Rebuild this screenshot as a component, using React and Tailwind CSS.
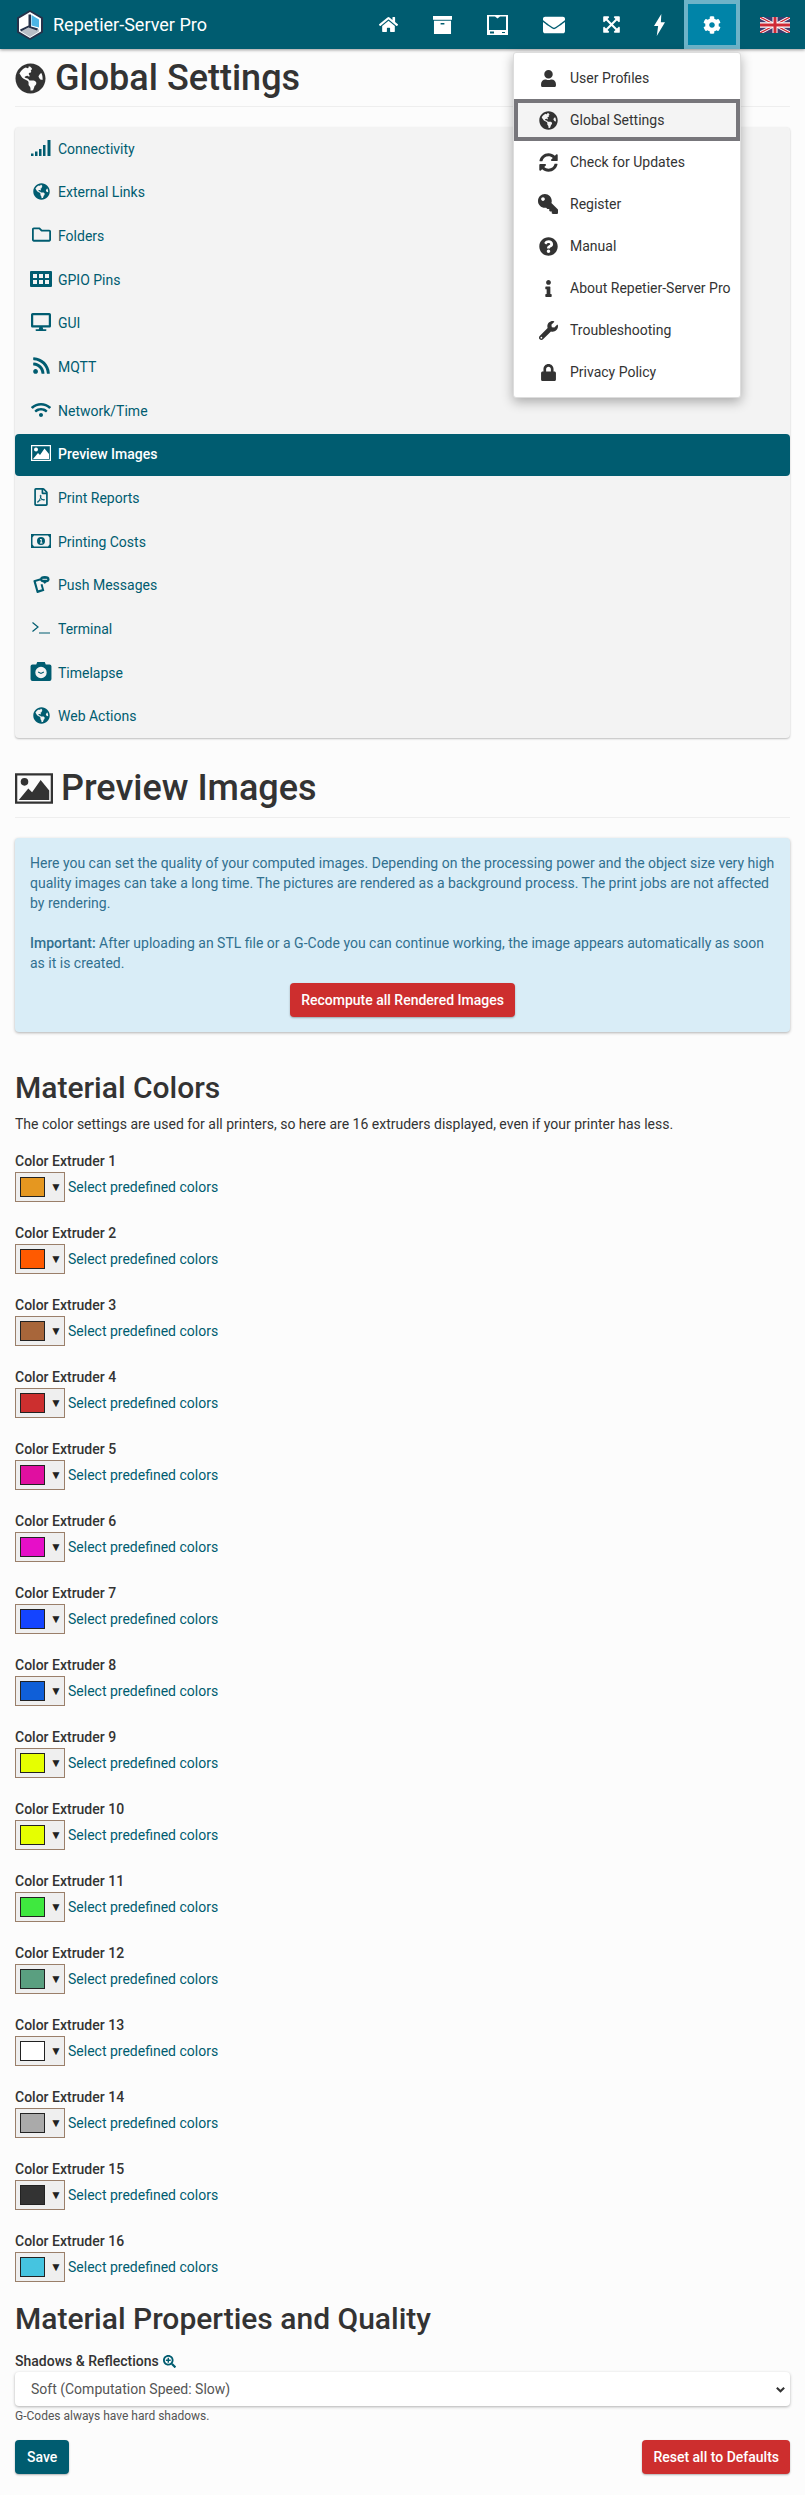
import {
  FaCog,
  FaDesktop,
  FaExpandArrowsAlt,
  FaEnvelope,
  FaGlobeAmericas,
  FaHome,
  FaInfo,
  FaKey,
  FaLock,
  FaQuestionCircle,
  FaRegFilePdf,
  FaRegFolder,
  FaRss,
  FaSearchPlus,
  FaSyncAlt,
  FaUser,
  FaWifi,
  FaWrench,
} from "react-icons/fa";

const Logo = () => (
  <svg viewBox="0 0 26 30" className="w-[26px] h-[30px]">
    <path d="M13 0 26 7.500v15L13 30 0 22.500v-15z" fill="#26324a" />
    <path d="M13 2 24 8.500v13L13 28 2 21.500v-13z" fill="#fff" />
    <path d="M14.500 5 22 9.500v8l-7.500-2z" fill="#4db5e5" />
    <path d="M13 17l9 2.500v2L13 27l-9-5.500z" fill="#b9bec6" />
    <path d="M11.500 4.500h2.500v12l7 2-1 2-8.500-3-7.500 4-1-2 8.500-4z" fill="#26324a" />
  </svg>
);

const ArchiveIcon = () => (
  <svg viewBox="0 0 20 19" className="w-[19px] h-[18px]" fill="currentColor">
    <path d="M0 0h20v4H0z" />
    <path fillRule="evenodd" d="M1 5h18v14H1zM8 7.500V9h4V7.500z" />
  </svg>
);

const TabletIcon = () => (
  <svg viewBox="0 0 21 20" className="w-[21px] h-[20px]" fill="currentColor">
    <path fillRule="evenodd" d="M0 0h21v20H0zM2 1.500v13.500h17V1.500h-6l-2.500 2-2.500-2zM3 16.500v2h4v-2zM15 17v1h3v-1z" />
  </svg>
);

const BoltIcon = () => (
  <svg viewBox="0 0 12 24" className="w-[11px] h-[22px]" fill="currentColor">
    <path d="M8 0 0 13h4.500L3 24l9-15H7.500z" />
  </svg>
);

const FlagIcon = () => (
  <svg viewBox="0 0 60 30" className="w-[30px] h-[16px]" preserveAspectRatio="none">
    <path d="M0 0h60v30H0z" fill="#3c3b6e" />
    <path d="M0 0l60 30M60 0 0 30" stroke="#fff" strokeWidth="6" />
    <path d="M0 0l60 30M60 0 0 30" stroke="#cf2a36" strokeWidth="2.500" />
    <path d="M30 0v30M0 15h60" stroke="#fff" strokeWidth="10" />
    <path d="M30 0v30M0 15h60" stroke="#cf2a36" strokeWidth="6" />
  </svg>
);

const SignalIcon = () => (
  <svg viewBox="0 0 20 16" className="w-[20px] h-[16px]" fill="currentColor">
    <path d="M0 13.500h2.500V16H0zM4 11.500h2.500V16H4zM8 9h2.500v7H8zM12 5h2.500v11H12zM16.500 0H19.500v16h-3z" />
  </svg>
);

const GridIcon = () => (
  <svg viewBox="0 0 22 16" className="w-[22px] h-[16px]" fill="currentColor">
    <path
      fillRule="evenodd"
      d="M1 0h20a1 1 0 0 1 1 1v14a1 1 0 0 1-1 1H1a1 1 0 0 1-1-1V1a1 1 0 0 1 1-1zM3 3v4h4V3zM9 3v4h4V3zM15 3v4h4V3zM3 9v4h4V9zM9 9v4h4V9zM15 9v4h4V9z"
    />
  </svg>
);

const PictureIcon = ({ size = "w-[20px] h-[16px]" }) => (
  <svg viewBox="0 0 20 16" className={size} fill="currentColor">
    <path fillRule="evenodd" d="M0 0h20v16H0zM1.200 1.200v13.600h17.600V1.200z" />
    <circle cx="5" cy="4.500" r="2" />
    <path d="M2 14l5-6 2 2 4.500-6.500L18 9v5z" />
  </svg>
);

const MoneyIcon = () => (
  <svg viewBox="0 0 20 14" className="w-[20px] h-[14px]" fill="currentColor">
    <path
      fillRule="evenodd"
      d="M0 0h20v14H0zM3 1.500 1.500 3.500v7L3 12.500h14l1.500-2v-7L17 1.500zM10 3a4 4 0 1 1 0 8 4 4 0 0 1 0-8zM9 5v1h.700v2.500H9v1h2.500v-1h-.7V5z"
    />
  </svg>
);

const PushIcon = () => (
  <svg viewBox="0 0 18 18" className="w-[17px] h-[17px]" fill="currentColor">
    <path
      fillRule="evenodd"
      d="M1 4.500 8 2.500l.500 2L3 6l2.500 9 4-1-1.500-5 2-.5 2 7-7 2.500a1 1 0 0 1-1.200-.7L.5 5.500A1 1 0 0 1 1 4.500z"
    />
    <ellipse cx="12.500" cy="3.500" rx="5" ry="3.500" />
    <path d="M10.500 6h4l-2 2.500z" />
    <path d="M10 3h5v1h-5z" fill="#f3f3f3" />
  </svg>
);

const PromptIcon = () => (
  <svg viewBox="0 0 18 12" className="w-[18px] h-[12px]" fill="none" stroke="currentColor" strokeWidth="1.200">
    <path d="M.500.500 6 5 .500 9.500M7 11h11" />
  </svg>
);

const CameraIcon = () => (
  <svg viewBox="0 0 22 20" className="w-[22px] h-[19px]" fill="currentColor">
    <path
      fillRule="evenodd"
      d="M7 0h8l1 2.500h4a2 2 0 0 1 2 2V18a2 2 0 0 1-2 2H2a2 2 0 0 1-2-2V4.500a2 2 0 0 1 2-2h4zM11 5a6 6 0 1 0 0 12 6 6 0 0 0 0-12z"
    />
    <path d="M8 10.500l3 1.500 3-1.500" fill="none" stroke="currentColor" strokeWidth="1.200" />
  </svg>
);

const SETTINGS = [
  { label: "Connectivity", icon: <SignalIcon /> },
  { label: "External Links", icon: <FaGlobeAmericas size={17} /> },
  { label: "Folders", icon: <FaRegFolder size={19} /> },
  { label: "GPIO Pins", icon: <GridIcon /> },
  { label: "GUI", icon: <FaDesktop size={20} /> },
  { label: "MQTT", icon: <FaRss size={19} /> },
  { label: "Network/Time", icon: <FaWifi size={20} /> },
  { label: "Preview Images", icon: <PictureIcon />, active: true },
  { label: "Print Reports", icon: <FaRegFilePdf size={18} /> },
  { label: "Printing Costs", icon: <MoneyIcon /> },
  { label: "Push Messages", icon: <PushIcon /> },
  { label: "Terminal", icon: <PromptIcon /> },
  { label: "Timelapse", icon: <CameraIcon /> },
  { label: "Web Actions", icon: <FaGlobeAmericas size={17} /> },
];

const MENU = [
  { label: "User Profiles", icon: <FaUser size={17} /> },
  { label: "Global Settings", icon: <FaGlobeAmericas size={19} />, active: true },
  { label: "Check for Updates", icon: <FaSyncAlt size={19} /> },
  { label: "Register", icon: <FaKey size={20} className="-scale-x-100" /> },
  { label: "Manual", icon: <FaQuestionCircle size={19} /> },
  { label: "About Repetier-Server Pro", icon: <FaInfo size={17} /> },
  { label: "Troubleshooting", icon: <FaWrench size={19} /> },
  { label: "Privacy Policy", icon: <FaLock size={17} /> },
];

const EXTRUDERS = [
  "#e59720",
  "#ff5a00",
  "#a8663a",
  "#cc2f2f",
  "#e00fa0",
  "#e60fc8",
  "#1444ff",
  "#0f5fd8",
  "#e6ff00",
  "#e6ff00",
  "#3fe83f",
  "#5a9f80",
  "#ffffff",
  "#aaaaaa",
  "#333333",
  "#45c4e0",
];

function NavBar() {
  return (
    <div className="relative z-10 flex items-center justify-between h-[49px] pl-[17px] pr-[15px] bg-[#005c70] text-white shadow-[0_1px_3px_rgba(0,0,0,0.4)]">
      <div className="flex items-center gap-[10px]">
        <Logo />
        <span className="text-[18px]">Repetier-Server Pro</span>
      </div>
      <div className="flex items-center h-full">
        <a className="flex justify-center items-center w-[44px]"><FaHome size={19} /></a>
        <a className="flex justify-center items-center w-[64px]"><ArchiveIcon /></a>
        <a className="flex justify-center items-center w-[46px]"><TabletIcon /></a>
        <a className="flex justify-center items-center w-[68px]"><FaEnvelope size={22} /></a>
        <a className="flex justify-center items-center w-[46px]"><FaExpandArrowsAlt size={19} /></a>
        <a className="flex justify-center items-center w-[50px]"><BoltIcon /></a>
        <a className="flex justify-center items-center w-[56px] h-full bg-[#0084a8] border-4 border-[#6db3c8]"><FaCog size={18} /></a>
        <a className="flex justify-center items-center w-[50px] pl-[20px]"><FlagIcon /></a>
      </div>
    </div>
  );
}

function UserMenu() {
  return (
    <div className="absolute top-[52px] left-[513px] w-[228px] py-[4px] h-[346px] bg-white rounded-[3px] border border-[#ddd] shadow-[0_4px_12px_rgba(0,0,0,0.3)] z-20">
      {MENU.map((item) => (
        <div
          key={item.label}
          className={`flex items-center h-[42px] text-[14px] text-[#333] ${item.active ? "bg-[#f4f4f4] border-4 border-[#77767b]" : ""}`}
        >
          <span className={`flex justify-center w-[48px] ${item.active ? "ml-[6px]" : "ml-[10px]"}`}>{item.icon}</span>
          <span className="ml-[-2px]">{item.label}</span>
        </div>
      ))}
    </div>
  );
}

function ExtruderRow({ index, color }) {
  return (
    <div className="mb-[21px]">
      <div className="text-[14px] leading-[20px] font-medium text-[#333] mb-[1px]">Color Extruder {index}</div>
      <div className="flex items-center">
        <div className="flex items-center w-[50px] h-[30px] pl-[4px] bg-[#efefef] border border-[#9a7f6a]">
          <div className="w-[25px] h-[20px] border border-[#222]" style={{ backgroundColor: color }} />
          <span className="ml-[5px] text-[12px] text-[#222]">▼</span>
        </div>
        <a className="ml-[3px] text-[14px] text-[#005c70]">Select predefined colors</a>
      </div>
    </div>
  );
}

export default function App() {
  return (
    <div className="relative min-h-[2495px] bg-[#fcfcfc] text-[#333] font-['Roboto',sans-serif]">
      <NavBar />
      <UserMenu />
      <div className="px-[15px]">
        <div className="flex items-center gap-[9px] pt-[9px] pb-[8px] border-b border-[#eee]">
          <FaGlobeAmericas size={31} />
          <h1 className="text-[36px] leading-[40px] font-medium">Global Settings</h1>
        </div>

        <div className="mt-[20px] h-[611px] rounded-[4px] bg-[#f3f3f3] shadow-[0_1px_2px_rgba(0,0,0,0.25)] pt-[1px]">
          {SETTINGS.map((item) => (
            <div
              key={item.label}
              className={`flex items-center h-[42px] mb-[1.7px] pl-[15px] rounded-[4px] text-[14px] ${item.active ? "bg-[#005c70] text-white font-medium" : "text-[#005c70]"}`}
            >
              <span className="flex justify-center w-[22px] mr-[6px] -mt-[3px]">{item.icon}</span>
              {item.label}
            </div>
          ))}
        </div>

        <div className="flex items-center gap-[8px] mt-[30px] pb-[9px] border-b border-[#eee]">
          <PictureIcon size="w-[38px] h-[31px]" />
          <h1 className="text-[36px] leading-[40px] font-medium">Preview Images</h1>
        </div>

        <div className="mt-[20px] h-[194px] p-[15px] rounded-[4px] bg-[#d9edf7] text-[14px] leading-[20px] text-[#31708f] shadow-[0_1px_3px_rgba(0,0,0,0.3)]">
          <p>
            Here you can set the quality of your computed images. Depending on the processing power and the object size very high quality images can take a long time. The pictures are rendered as a background process. The print jobs are not affected by rendering.
          </p>
          <p className="mt-[20px]">
            <b className="font-medium">Important:</b> After uploading an STL file or a G-Code you can continue working, the image appears automatically as soon as it is created.
          </p>
          <div className="flex justify-center mt-[10px]">
            <button className="h-[34px] px-[11px] rounded-[4px] bg-[#cd2e2e] text-white font-medium shadow-[0_1px_2px_rgba(0,0,0,0.3)]">
              Recompute all Rendered Images
            </button>
          </div>
        </div>

        <h2 className="mt-[39px] text-[30px] leading-[33px] font-medium">Material Colors</h2>
        <p className="mt-[10px] text-[14px] leading-[20px]">
          The color settings are used for all printers, so here are 16 extruders displayed, even if your printer has less.
        </p>

        <div className="mt-[17px]">
          {EXTRUDERS.map((color, i) => (
            <ExtruderRow key={i} index={i + 1} color={color} />
          ))}
        </div>

        <h2 className="-mt-[1px] text-[30px] leading-[33px] font-medium">Material Properties and Quality</h2>

        <div className="mt-[16px] flex items-center gap-[4px] text-[14px] leading-[20px] font-medium">
          Shadows &amp; Reflections
          <FaSearchPlus size={13} className="text-[#005c70]" />
        </div>
        <div className="flex items-center justify-between h-[34px] mt-[1px] pl-[16px] pr-[4px] bg-white rounded-[4px] text-[14px] text-[#555] shadow-[0_1px_3px_rgba(0,0,0,0.3)]">
          Soft (Computation Speed: Slow)
          <svg viewBox="0 0 12 12" className="w-[11px] h-[11px]" fill="none" stroke="#333" strokeWidth="2.200">
            <path d="M2 4l4 4 4-4" />
          </svg>
        </div>
        <div className="mt-[2px] text-[12px] leading-[17px] text-[#555]">G-Codes always have hard shadows.</div>

        <div className="flex justify-between mt-[15px]">
          <button className="h-[34px] px-[12px] rounded-[4px] bg-[#005c70] text-white text-[14px] font-medium shadow-[0_1px_2px_rgba(0,0,0,0.3)]">
            Save
          </button>
          <button className="h-[34px] px-[11px] rounded-[4px] bg-[#cd2e2e] text-white text-[14px] font-medium shadow-[0_1px_2px_rgba(0,0,0,0.3)]">
            Reset all to Defaults
          </button>
        </div>
      </div>
    </div>
  );
}
